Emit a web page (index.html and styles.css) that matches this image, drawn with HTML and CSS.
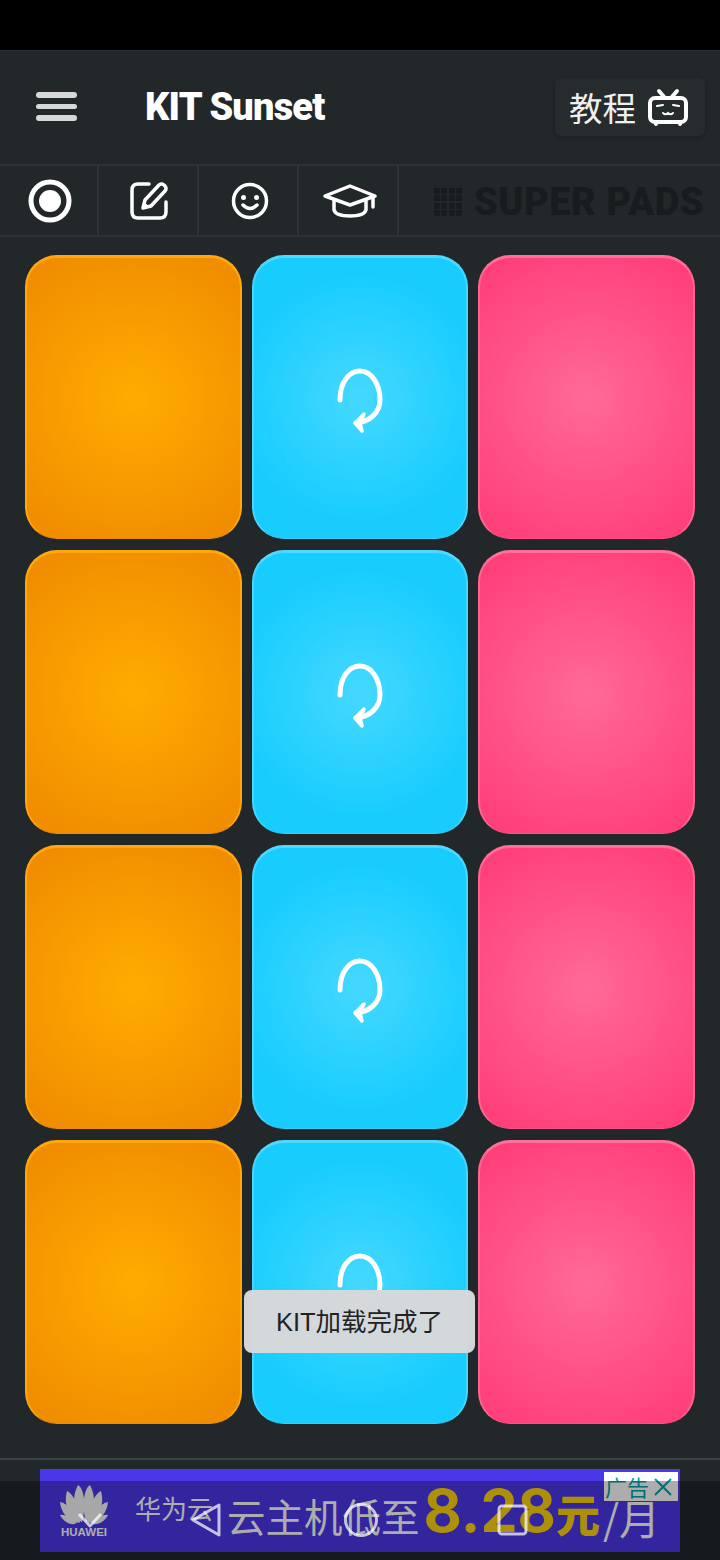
FILE: index.html
```html
<!DOCTYPE html>
<html>

<head>
    <meta charset="utf-8">
    <title>KIT Sunset</title>
    <link rel="stylesheet" href="styles.css">
</head>

<body>
    <div class="statusbar"></div>

    <div class="header">
        <div class="menu"><span></span><span></span><span></span></div>
        <div class="title">KIT Sunset</div>
        <div class="tutorial">
            <span>教程</span>
            <svg class="tv" width="44" height="40" viewBox="0 0 44 40">
                <path d="M13 4l6 7M31 4l-6 7" />
                <rect x="4" y="11" width="36" height="24" rx="5" />
                <path d="M10 35v2M34 35v2" />
                <path class="thin" d="M11 19l6-1M33 19l-6-1M17 26q2.500 2.500 5 0q2.500 2.500 5 0" />
            </svg>
        </div>
    </div>

    <div class="toolbar">
        <div class="tool first">
            <svg width="46" height="46" viewBox="0 0 46 46">
                <circle cx="23" cy="23" r="19" class="wide" />
                <circle cx="23" cy="23" r="11" class="solid" />
            </svg>
        </div>
        <div class="tool">
            <svg width="42" height="42" viewBox="0 0 42 42">
                <path d="M20 4H9q-6 0-6 6v22q0 6 6 6h22q6 0 6-6V22" />
                <path d="M14 28l2-8L30 5q2.500-2 5 0l1 1q2 2.500 0 5L22 26z" />
                <path class="solid" d="M14 28l1.500-6 4.500 4.500z" />
            </svg>
        </div>
        <div class="tool">
            <svg width="40" height="40" viewBox="0 0 40 40">
                <circle cx="20" cy="20" r="16.500" />
                <circle cx="13.500" cy="16.500" r="2.500" class="solid" />
                <circle cx="26.500" cy="16.500" r="2.500" class="solid" />
                <path d="M13 24q7 7 14 0" />
            </svg>
        </div>
        <div class="tool">
            <svg width="56" height="36" viewBox="0 0 56 36">
                <path d="M28 3L3 13l25 9 25-9z" />
                <path d="M12 18v9q2 6 16 6t16-6v-9" />
                <path d="M51 14v10" />
            </svg>
        </div>
        <div class="brand">
            <svg width="28" height="28" viewBox="0 0 28 28">
                <rect x="0" y="0" width="6" height="6" /><rect x="7" y="0" width="6" height="6" /><rect x="15" y="0" width="6" height="6" /><rect x="22" y="0" width="6" height="6" />
                <rect x="0" y="7" width="6" height="6" /><rect x="7" y="7" width="6" height="6" /><rect x="15" y="7" width="6" height="6" /><rect x="22" y="7" width="6" height="6" />
                <rect x="0" y="15" width="6" height="6" /><rect x="7" y="15" width="6" height="6" /><rect x="15" y="15" width="6" height="6" /><rect x="22" y="15" width="6" height="6" />
                <rect x="0" y="22" width="6" height="6" /><rect x="7" y="22" width="6" height="6" /><rect x="15" y="22" width="6" height="6" /><rect x="22" y="22" width="6" height="6" />
            </svg>
            <span>SUPER PADS</span>
        </div>
    </div>

    <div class="pads">
        <div class="pad orange"></div>
        <div class="pad blue">
            <svg class="loop" width="48" height="66" viewBox="0 0 48 66"><path d="M4 32C4 14 13 3 24 3C36 3 44 17 44 32C44 44 34 54 20 55" /><path class="head" d="M28 46l-9 9 7 8-2-8z" /></svg>
        </div>
        <div class="pad pink"></div>
        <div class="pad orange"></div>
        <div class="pad blue">
            <svg class="loop" width="48" height="66" viewBox="0 0 48 66"><path d="M4 32C4 14 13 3 24 3C36 3 44 17 44 32C44 44 34 54 20 55" /><path class="head" d="M28 46l-9 9 7 8-2-8z" /></svg>
        </div>
        <div class="pad pink"></div>
        <div class="pad orange"></div>
        <div class="pad blue">
            <svg class="loop" width="48" height="66" viewBox="0 0 48 66"><path d="M4 32C4 14 13 3 24 3C36 3 44 17 44 32C44 44 34 54 20 55" /><path class="head" d="M28 46l-9 9 7 8-2-8z" /></svg>
        </div>
        <div class="pad pink"></div>
        <div class="pad orange"></div>
        <div class="pad blue">
            <svg class="loop" width="48" height="66" viewBox="0 0 48 66"><path d="M4 32C4 14 13 3 24 3C36 3 44 17 44 32C44 44 34 54 20 55" /><path class="head" d="M28 46l-9 9 7 8-2-8z" /></svg>
        </div>
        <div class="pad pink"></div>
    </div>

    <div class="footer">
        <div class="ad">
            <div class="ad-logo">
                <svg width="48" height="40" viewBox="0 0 48 40">
                    <path d="M21 37C14 27 11 13 18 0C25 4 26 24 22 37z" />
                    <path d="M27 37C34 27 37 13 30 0C23 4 22 24 26 37z" />
                    <path d="M19 38C9 31 3 20 7 6C14 9 21 26 20 37z" />
                    <path d="M29 38C39 31 45 20 41 6C34 9 27 26 28 37z" />
                    <path d="M17 38C8 35 1 28 0 17C8 18 15 30 18 37z" />
                    <path d="M31 38C40 35 47 28 48 17C40 18 33 30 30 37z" />
                    <path d="M15 39C9 40 3 36 0 30C6 29 12 34 16 38z" />
                    <path d="M33 39C39 40 45 36 48 30C42 29 36 34 32 38z" />
                </svg>
                <span>HUAWEI</span>
            </div>
            <span class="ad-brand">华为云</span>
            <span class="ad-text">云主机低至</span>
            <span class="ad-price">8.28<em>元</em></span>
            <span class="ad-text ad-unit">/月</span>
            <div class="ad-label">广告<svg width="20" height="20" viewBox="0 0 20 20"><path d="M2 2l16 16M18 2L2 18" /></svg></div>
        </div>
    </div>

    <div class="toast">KIT加载完成了</div>

    <div class="navbar">
        <svg width="720" height="79" viewBox="0 0 720 79">
            <path d="M79 33l11 12 11-12" />
            <path d="M193 39l26-15v30z" />
            <circle cx="361" cy="39" r="15.500" />
            <rect x="499" y="25" width="27" height="28" rx="3" />
        </svg>
    </div>
</body>

</html>
```

FILE: styles.css
```css
* {
    margin: 0px;
    padding: 0px;
    box-sizing: border-box;
}

body {
    position: relative;
    width: 720px;
    height: 1560px;
    overflow: hidden;
    background: #22272a;
    font-family: "Roboto", "Noto Sans CJK SC", sans-serif;
}

.statusbar {
    height: 50px;
    background: #000;
}

.header {
    display: flex;
    align-items: center;
    height: 114px;
    padding: 0 15px 2px 36px;
    border-top: 1px solid #2b3034;
}

.menu {
    display: flex;
    flex-direction: column;
    gap: 6px;
    width: 41px;
}

.menu span {
    display: block;
    height: 5.500px;
    border-radius: 3px;
    background: #d6d8d9;
}

.title {
    margin-left: 68px;
    color: #fff;
    font-size: 38px;
    font-weight: 900;
    letter-spacing: -0.800px;
}

.tutorial {
    display: flex;
    align-items: center;
    gap: 10px;
    height: 58px;
    margin-left: auto;
    padding: 0 15px 0 14px;
    border-radius: 6px;
    background: #262b2e;
    box-shadow: 0 2px 5px rgba(0, 0, 0, 0.2);
    color: #f0f0f0;
    font-family: "Noto Sans CJK SC", sans-serif;
    font-size: 33.500px;
}

.tv {
    fill: none;
    stroke: #fff;
    stroke-width: 4;
    stroke-linecap: round;
}

.tv .thin {
    stroke-width: 2;
}

.toolbar {
    display: flex;
    height: 73px;
    border-top: 2px solid #2e3336;
    border-bottom: 2px solid #2e3336;
}

.tool {
    display: flex;
    align-items: center;
    justify-content: center;
    width: 100px;
    padding-left: 2px;
    border-right: 2px solid #2e3336;
}

.tool.first {
    width: 99px;
}

.tool svg {
    margin-left: 1px;
    fill: none;
    stroke: #fff;
    stroke-width: 3.500;
    stroke-linecap: round;
    stroke-linejoin: round;
}

.tool .wide {
    stroke-width: 5;
}

.tool .solid {
    fill: #fff;
    stroke: none;
}

.brand {
    display: flex;
    align-items: center;
    gap: 12px;
    padding: 2px 0 0 35px;
    color: #181c1e;
    font-size: 38px;
    font-weight: 900;
    letter-spacing: 0.500px;
    white-space: nowrap;
}

.brand svg {
    fill: #181c1e;
}

.pads {
    display: grid;
    grid-template-columns: repeat(3, 1fr);
    grid-auto-rows: 284px;
    gap: 11px 10px;
    padding: 18px 25px 0;
}

.pad {
    display: flex;
    align-items: center;
    justify-content: center;
    border-style: solid;
    border-width: 3px 2px 1px;
    border-radius: 32px;
}

.orange {
    border-color: #ffa70c #ffa70c #ee8c00;
    background: radial-gradient(circle at center, #ffac00 0, #ef8a00 100%);
}

.blue {
    border-color: #4fd9ff #45d6ff #2fd0fd;
    background: radial-gradient(circle at center, #45d8ff 0, #18cdfe 70%);
}

.pink {
    border-color: #ff6f9a #ff6592 #ff4f85;
    background: radial-gradient(circle at center, #ff6a97 0, #ff3f7a 92%);
}

.loop {
    margin-top: 6px;
    fill: none;
    stroke: #fff;
    stroke-width: 5;
    stroke-linecap: round;
    stroke-linejoin: round;
}

.loop .head {
    fill: #fff;
    stroke-width: 3.500;
}

.footer {
    height: 102px;
    margin-top: 34px;
    padding-top: 9px;
    border-top: 2px solid #3c4143;
}

.ad {
    position: relative;
    display: flex;
    align-items: center;
    width: 640px;
    height: 83px;
    margin: 0 auto;
    padding: 12px 0 0 19px;
    background: #4a37e8;
    color: #fff;
    font-family: "Noto Sans CJK SC", sans-serif;
    white-space: nowrap;
}

.ad-logo {
    display: flex;
    flex-direction: column;
    align-items: center;
    width: 50px;
    margin: 0 26px 10px 0;
}

.ad-logo svg {
    fill: #f6f6f6;
}

.ad-logo span {
    margin-top: 1px;
    font-family: "Liberation Sans", sans-serif;
    font-size: 11.500px;
    font-weight: 700;
    line-height: 12px;
}

.ad-brand {
    width: 92px;
    margin-top: -18px;
    font-size: 26px;
}

.ad-text {
    margin-top: -4px;
    font-size: 38.500px;
}

.ad-unit {
    margin: 0 0 0 3px;
    font-size: 41px;
    line-height: 30px;
}

.ad-price {
    margin: -10px 0 0 4px;
    color: #ffd30f;
    font-family: "Inter", sans-serif;
    font-size: 59px;
    font-weight: 700;
    line-height: 60px;
}

.ad-price em {
    font-family: "Noto Sans CJK SC", sans-serif;
    font-size: 44px;
    font-style: normal;
    font-weight: 900;
}

.ad-label {
    position: absolute;
    top: 3px;
    right: 2px;
    display: flex;
    align-items: center;
    justify-content: space-between;
    width: 74px;
    height: 29px;
    padding: 0 5px 0 1px;
    background: #fff;
    color: #00a3ab;
    font-size: 22px;
    line-height: 29px;
}

.ad-label svg {
    fill: none;
    stroke: #00a3ab;
    stroke-width: 2;
}

.toast {
    position: absolute;
    top: 1290px;
    left: 244px;
    width: 231px;
    height: 63px;
    border-radius: 8px;
    background: rgba(214, 216, 218, 0.99);
    color: #222;
    font-family: "Liberation Sans", "Noto Sans CJK SC", sans-serif;
    font-size: 25.500px;
    line-height: 64px;
    text-align: center;
}

.navbar {
    position: absolute;
    left: 0;
    bottom: 0;
    width: 720px;
    height: 79px;
    background: rgba(0, 0, 0, 0.32);
}

.navbar svg {
    display: block;
    fill: none;
    stroke: rgba(255, 255, 255, 0.72);
    stroke-width: 3;
    stroke-linejoin: round;
}
```
